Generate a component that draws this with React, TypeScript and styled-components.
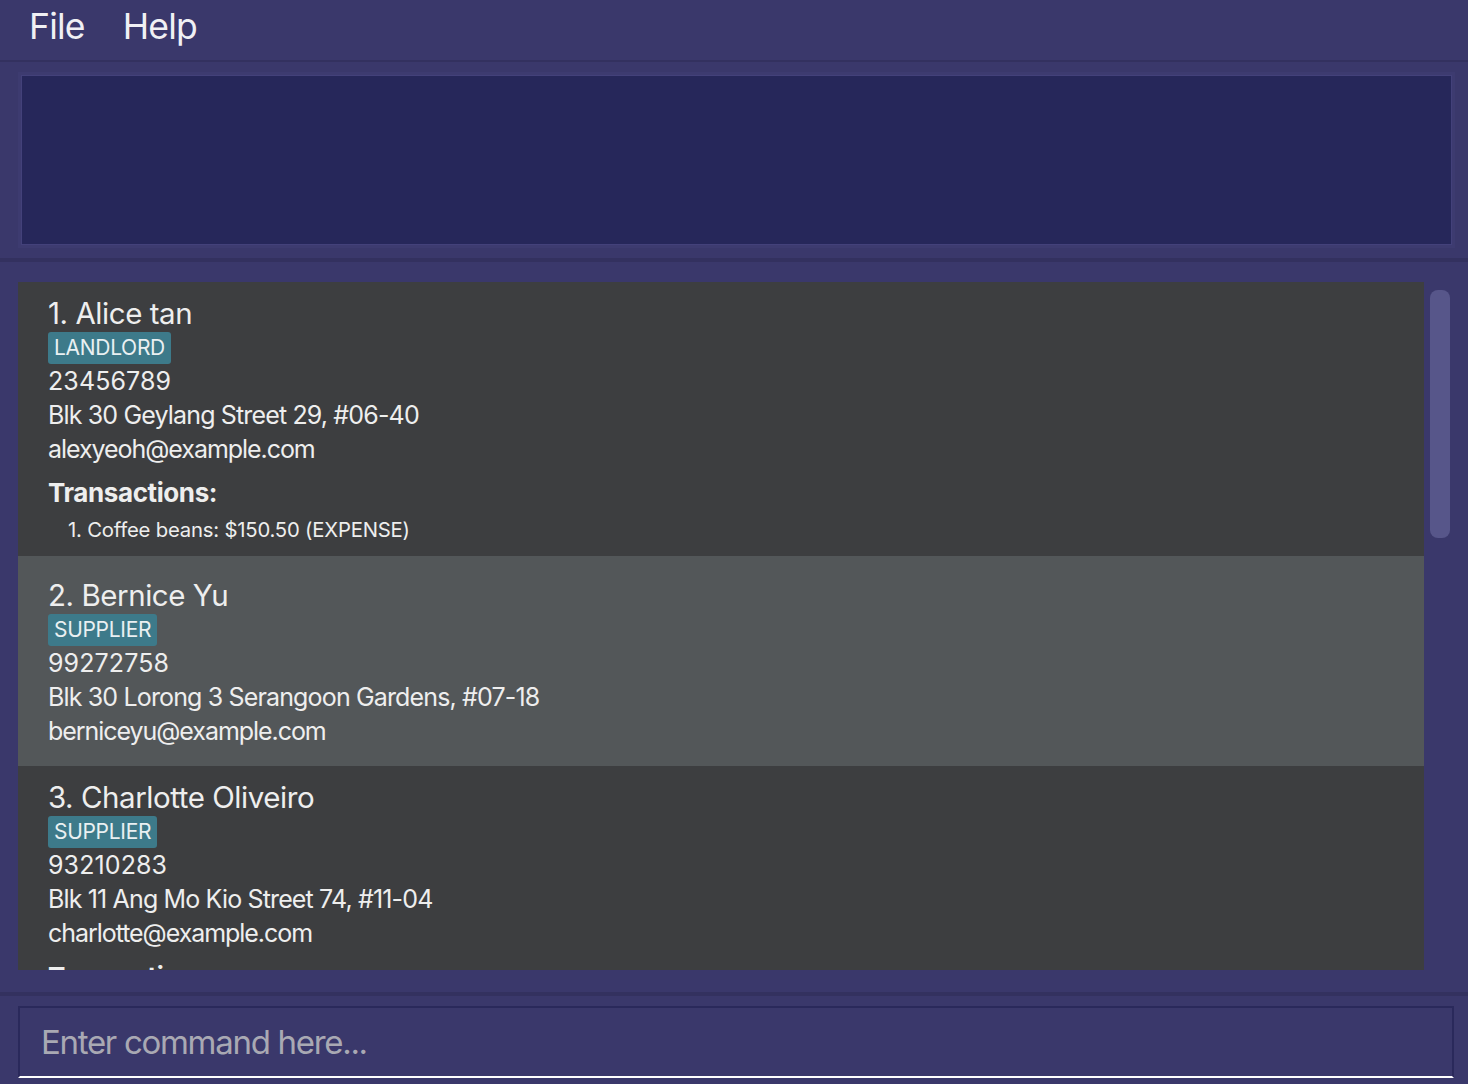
import React from "react";
import styled, { createGlobalStyle } from "styled-components";

const GlobalStyle = createGlobalStyle`
  html, body {
    margin: 0;
    padding: 0;
    background: #3a386b;
  }
  body {
    font-family: Inter, "Noto Sans", sans-serif;
    color: #eeeeee;
    overflow: hidden;
  }
  * { box-sizing: border-box; }
`;

const Window = styled.div`
  width: 1468px;
  height: 1084px;
  display: flex;
  flex-direction: column;
  background: #3a386b;
`;

const MenuBar = styled.div`
  height: 62px;
  display: flex;
  align-items: flex-start;
  gap: 38px;
  padding: 2px 0 0 29px;
  border-bottom: 2px solid #33315f;
`;

const MenuItem = styled.span`
  font-size: 35.5px;
  line-height: 50px;
  letter-spacing: -0.8px;
  color: #f0f0f4;
`;

const ResultSection = styled.div`
  height: 200px;
  padding: 10px 13px 10px 18px;
  border-bottom: 4px solid #33315f;
`;

const ResultBox = styled.div`
  height: 176px;
  background: #26275a;
  border: 3px solid #3d3b70;
  box-shadow: inset 0 0 0 1px #43417a;
`;

const ListSection = styled.div`
  height: 734px;
  display: flex;
  padding: 20px 18px 22px 18px;
  gap: 6px;
  border-bottom: 4px solid #33315f;
`;

const ListViewport = styled.div`
  flex: 1;
  overflow: hidden;
  display: flex;
  flex-direction: column;
`;

const Card = styled.div<{ $light?: boolean; $top: number; $bottom: number }>`
  flex-shrink: 0;
  background: ${(p) => (p.$light ? "#535759" : "#3d3e40")};
  padding: ${(p) => p.$top}px 30px ${(p) => p.$bottom}px 30px;
  display: flex;
  flex-direction: column;
  align-items: flex-start;
`;

const Name = styled.div`
  font-size: 29.5px;
  line-height: 36px;
  letter-spacing: -0.45px;
`;

const Tag = styled.span`
  margin-top: 1px;
  height: 32px;
  padding: 0 6px;
  background: #3d7a8a;
  border-radius: 3px;
  font-size: 21px;
  line-height: 32px;
  letter-spacing: -0.3px;
  color: #eaf0f2;
`;

const Field = styled.div<{ $tracking?: number }>`
  font-size: 25px;
  line-height: 34px;
  letter-spacing: ${(p) => (p.$tracking ?? -0.85)}px;
`;

const TxTitle = styled.div`
  margin-top: 10px;
  font-size: 26px;
  line-height: 34px;
  font-weight: 700;
  letter-spacing: -0.4px;
`;

const TxItem = styled.div`
  margin-top: 5px;
  padding-left: 20px;
  font-size: 20.3px;
  line-height: 30px;
  letter-spacing: -0.2px;
`;

const ScrollTrack = styled.div`
  width: 20px;
  padding-top: 8px;
`;

const ScrollThumb = styled.div`
  width: 20px;
  height: 248px;
  border-radius: 8px;
  background: #57568a;
`;

const CommandSection = styled.div`
  flex: 1;
  padding: 10px 14px 6px 18px;
`;

const CommandBox = styled.div`
  height: 72px;
  border: 2px solid #2a295b;
  border-bottom: 2px solid #ffffff;
  display: flex;
  align-items: center;
  padding-left: 21px;
`;

const CommandInput = styled.input`
  flex: 1;
  height: 60px;
  background: transparent;
  border: none;
  outline: none;
  font-family: Inter, "Noto Sans", sans-serif;
  font-size: 33px;
  line-height: 60px;
  letter-spacing: -1.3px;
  color: #eeeeee;
  padding: 0;
  &::placeholder {
    color: #a9a9b3;
  }
`;

type Person = {
  name: string;
  tag: string;
  phone: string;
  address: string;
  email: string;
  tx?: string[];
  light?: boolean;
  top: number;
  bottom: number;
};

const people: Person[] = [
  {
    name: "1. Alice tan",
    tag: "LANDLORD",
    phone: "23456789",
    address: "Blk 30 Geylang Street 29, #06-40",
    email: "alexyeoh@example.com",
    tx: ["1. Coffee beans: $150.50 (EXPENSE)"],
    top: 13,
    bottom: 11,
  },
  {
    name: "2. Bernice Yu",
    tag: "SUPPLIER",
    phone: "99272758",
    address: "Blk 30 Lorong 3 Serangoon Gardens, #07-18",
    email: "berniceyu@example.com",
    light: true,
    top: 21,
    bottom: 18,
  },
  {
    name: "3. Charlotte Oliveiro",
    tag: "SUPPLIER",
    phone: "93210283",
    address: "Blk 11 Ang Mo Kio Street 74, #11-04",
    email: "charlotte@example.com",
    tx: ["1. Office supplies: $45.00 (EXPENSE)"],
    top: 13,
    bottom: 11,
  },
];

export default function App() {
  return (
    <>
      <GlobalStyle />
      <Window>
        <MenuBar>
          <MenuItem>File</MenuItem>
          <MenuItem>Help</MenuItem>
        </MenuBar>
        <ResultSection>
          <ResultBox />
        </ResultSection>
        <ListSection>
          <ListViewport>
            {people.map((p) => (
              <Card key={p.name} $light={p.light} $top={p.top} $bottom={p.bottom}>
                <Name>{p.name}</Name>
                <Tag>{p.tag}</Tag>
                <Field $tracking={0.1}>{p.phone}</Field>
                <Field>{p.address}</Field>
                <Field $tracking={-1.05}>{p.email}</Field>
                {p.tx && (
                  <>
                    <TxTitle>Transactions:</TxTitle>
                    {p.tx.map((t) => (
                      <TxItem key={t}>{t}</TxItem>
                    ))}
                  </>
                )}
              </Card>
            ))}
          </ListViewport>
          <ScrollTrack>
            <ScrollThumb />
          </ScrollTrack>
        </ListSection>
        <CommandSection>
          <CommandBox>
            <CommandInput placeholder="Enter command here..." />
          </CommandBox>
        </CommandSection>
      </Window>
    </>
  );
}
